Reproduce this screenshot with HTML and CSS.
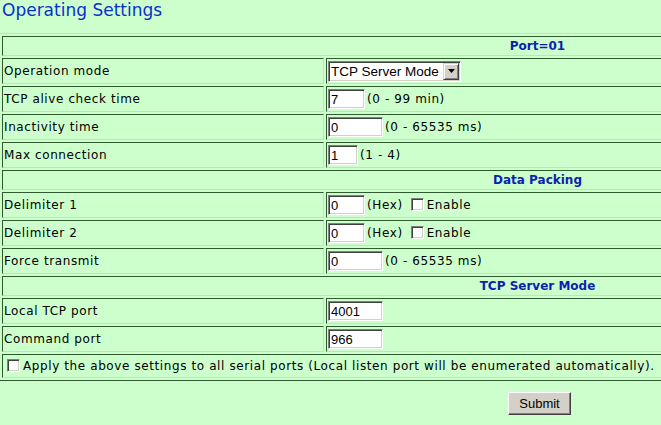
FILE: index.html
```html
<!DOCTYPE html>
<html>
<head>
<meta charset="utf-8">
<title>Operating Settings</title>
<link rel="stylesheet" href="styles.css">
</head>
<body>
<h1 class="title">Operating Settings</h1>
<form class="form">
<table class="grid">
  <colgroup><col class="c-lbl"><col class="c-val"></colgroup>
  <tr><td class="hdr" colspan="2">Port=01</td></tr>
  <tr>
    <td class="lbl">Operation mode</td>
    <td class="val"><span class="sel-wrap"><select class="sel"><option>TCP Server Mode</option></select><span class="sel-btn"><svg width="7" height="4" viewBox="0 0 7 4"><path d="M0 0H7L3.5 4Z" fill="#000"/></svg></span></span></td>
  </tr>
  <tr>
    <td class="lbl">TCP alive check time</td>
    <td class="val"><input class="txt w37" value="7"><span class="unit">(0 - 99 min)</span></td>
  </tr>
  <tr>
    <td class="lbl">Inactivity time</td>
    <td class="val"><input class="txt w55" value="0"><span class="unit">(0 - 65535 ms)</span></td>
  </tr>
  <tr>
    <td class="lbl">Max connection</td>
    <td class="val"><input class="txt w30" value="1"><span class="unit">(1 - 4)</span></td>
  </tr>
  <tr><td class="hdr" colspan="2">Data Packing</td></tr>
  <tr>
    <td class="lbl">Delimiter 1</td>
    <td class="val"><input class="txt w37" value="0"><span class="unit">(Hex)</span><label class="chk"><input type="checkbox" class="cb">Enable</label></td>
  </tr>
  <tr>
    <td class="lbl">Delimiter 2</td>
    <td class="val"><input class="txt w37" value="0"><span class="unit">(Hex)</span><label class="chk"><input type="checkbox" class="cb">Enable</label></td>
  </tr>
  <tr>
    <td class="lbl">Force transmit</td>
    <td class="val"><input class="txt w55" value="0"><span class="unit">(0 - 65535 ms)</span></td>
  </tr>
  <tr><td class="hdr" colspan="2">TCP Server Mode</td></tr>
  <tr>
    <td class="lbl">Local TCP port</td>
    <td class="val"><input class="txt w55" value="4001"></td>
  </tr>
  <tr>
    <td class="lbl">Command port</td>
    <td class="val"><input class="txt w55" value="966"></td>
  </tr>
  <tr>
    <td class="apply" colspan="2"><label class="chk-all"><input type="checkbox" class="cb">Apply the above settings to all serial ports (Local listen port will be enumerated automatically).</label></td>
  </tr>
</table>
<div class="actions"><button type="button" class="btn">Submit</button></div>
</form>
</body>
</html>
```

FILE: styles.css
```css
html, body {
  margin: 0;
  padding: 0;
  overflow: hidden;
  background: #ccffcc;
}
body {
  font-family: "DejaVu Sans", Verdana, sans-serif;
  font-size: 12px;
  color: #000;
}
.title {
  margin: 0;
  padding: 0 0 0 2px;
  height: 33px;
  font-family: "DejaVu Sans", Verdana, sans-serif;
  font-size: 17px;
  font-weight: normal;
  line-height: 20px;
  color: #0b2fd0;
}
.form {
  margin: 0;
  width: 1077px;
  margin-left: -1px;
}
.grid {
  width: 1077px;
  table-layout: fixed;
  border-collapse: separate;
  border-spacing: 2px;
  border: 1px solid;
  border-color: #d4d4d4 #2f5a2f #2f5a2f #d4d4d4;
}
.c-lbl { width: 322px; }
.grid td {
  padding: 1px;
  border: 1px solid;
  border-color: #2f5a2f #d4d4d4 #d4d4d4 #2f5a2f;
  vertical-align: middle;
  white-space: nowrap;
}
.grid td.lbl, .grid td.val, .grid td.apply {
  letter-spacing: 0.6px;
}
.grid td.hdr {
  height: 16px;
  text-align: center;
  font-weight: bold;
  color: #0d1fb0;
  line-height: 16px;
}
.grid td.lbl, .grid td.val {
  height: 22px;
  line-height: 16px;
}
.grid td.apply {
  height: 20px;
}
.txt {
  box-sizing: border-box;
  height: 20px;
  margin: 0;
  padding: 0 2px;
  border: 1px solid;
  border-color: #808080 #ffffff #ffffff #808080;
  box-shadow: inset 1px 1px 0 #404040, inset -1px -1px 0 #d4d0c8;
  background: #fff;
  font-family: "Liberation Sans", Arial, sans-serif;
  font-size: 13px;
  letter-spacing: 0;
  color: #000;
  vertical-align: middle;
  outline: none;
}
.w30 { width: 30px; }
.w37 { width: 37px; }
.w55 { width: 55px; }
.unit {
  margin-left: 2px;
  vertical-align: middle;
}
.chk {
  margin-left: 8px;
  vertical-align: middle;
}
.cb {
  -webkit-appearance: none;
  appearance: none;
  box-sizing: border-box;
  width: 13px;
  height: 13px;
  margin: 0 3px 0 0;
  border: 1px solid;
  border-color: #808080 #ffffff #ffffff #808080;
  box-shadow: inset 1px 1px 0 #404040, inset -1px -1px 0 #d4d0c8;
  background: #fff;
  vertical-align: -2px;
}
.chk-all {
  padding-left: 3px;
}
.sel-wrap {
  position: relative;
  display: inline-block;
  vertical-align: middle;
}
.sel {
  -webkit-appearance: none;
  appearance: none;
  box-sizing: border-box;
  width: 133px;
  height: 21px;
  margin: 0;
  padding: 0 0 0 2px;
  border: 1px solid;
  border-color: #808080 #ffffff #ffffff #808080;
  box-shadow: inset 1px 1px 0 #404040, inset -1px -1px 0 #d4d0c8;
  background: #fff;
  font-family: "Liberation Sans", Arial, sans-serif;
  font-size: 13.5px;
  letter-spacing: 0;
  color: #000;
  display: block;
  outline: none;
}
.sel-btn {
  position: absolute;
  top: 2px;
  right: 2px;
  width: 16px;
  height: 17px;
  box-sizing: border-box;
  background: #d4d0c8;
  border: 1px solid;
  border-color: #d4d0c8 #404040 #404040 #d4d0c8;
  box-shadow: inset 1px 1px 0 #fff, inset -1px -1px 0 #808080;
  display: flex;
  align-items: center;
  justify-content: center;
  pointer-events: none;
}
.actions {
  text-align: center;
  padding-top: 11px;
  padding-left: 4px;
}
.btn {
  box-sizing: border-box;
  width: 63px;
  height: 23px;
  padding: 0;
  background: #d4d0c8;
  border: 1px solid;
  border-color: #fff #404040 #404040 #fff;
  box-shadow: inset -1px -1px 0 #808080;
  font-family: "Liberation Sans", Arial, sans-serif;
  font-size: 13px;
  color: #000;
}
```
